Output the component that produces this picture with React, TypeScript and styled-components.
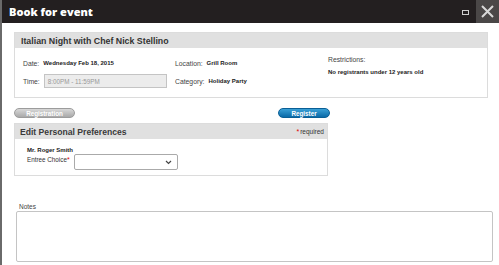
import React from 'react';
import styled, { createGlobalStyle } from 'styled-components';

const GlobalStyle = createGlobalStyle`
  html, body {
    margin: 0;
    padding: 0;
    background: #ffffff;
    font-family: Arial, "Liberation Sans", sans-serif;
    color: #222;
  }
`;

export default function App() {
  return (
    <>
      <GlobalStyle />
      <Dialog>
        <TitleBar>
          <DialogTitle>Book for event</DialogTitle>
          <TitleActions>
            <MinButton>
              <MinBox />
            </MinButton>
            <CloseButton>
              <svg width="13" height="13" viewBox="0 0 13 13">
                <path d="M1 1L12 12M12 1L1 12" stroke="#d8d8d8" strokeWidth="2" />
              </svg>
            </CloseButton>
          </TitleActions>
        </TitleBar>
        <Body>
          <EventCard>
            <CardHeader>
              <EventName>Italian Night with Chef Nick Stellino</EventName>
            </CardHeader>
            <EventGrid>
              <Field>
                <Label>Date:</Label>
                <Value>Wednesday Feb 18, 2015</Value>
              </Field>
              <Field>
                <Label>Location:</Label>
                <Value>Grill Room</Value>
              </Field>
              <RestrictionCell>
                <Label>Restrictions:</Label>
                <Value>No registrants under 12 years old</Value>
              </RestrictionCell>
              <Field>
                <Label>Time:</Label>
                <TimeBox>8:00PM - 11:59PM</TimeBox>
              </Field>
              <Field>
                <Label>Category:</Label>
                <Value>Holiday Party</Value>
              </Field>
            </EventGrid>
          </EventCard>

          <Steps>
            <Pill>Registration</Pill>
            <Pill $active>Register</Pill>
          </Steps>

          <PrefCard>
            <PrefHeader>
              <PrefTitle>Edit Personal Preferences</PrefTitle>
              <Required>
                <Star>*</Star>required
              </Required>
            </PrefHeader>
            <PrefBody>
              <Guest>Mr. Roger Smith</Guest>
              <ChoiceRow>
                <ChoiceLabel>
                  Entree Choice<Star>*</Star>
                </ChoiceLabel>
                <Select>
                  <svg width="7" height="5" viewBox="0 0 7 5">
                    <path d="M1 1L3.5 3.5L6 1" stroke="#444" strokeWidth="1.2" fill="none" />
                  </svg>
                </Select>
              </ChoiceRow>
            </PrefBody>
          </PrefCard>

          <NotesBlock>
            <NotesLabel>Notes</NotesLabel>
            <NotesArea />
          </NotesBlock>
        </Body>
      </Dialog>
    </>
  );
}

const Dialog = styled.div`
  width: 499px;
  height: 265px;
  display: flex;
  flex-direction: column;
  border-left: 2px solid #6a6a6a;
  box-sizing: border-box;
  overflow: hidden;
`;

const TitleBar = styled.header`
  height: 23px;
  background: #231f20;
  display: flex;
  align-items: center;
  justify-content: space-between;
  padding-left: 7px;
  flex-shrink: 0;
`;

const DialogTitle = styled.h1`
  margin: 0;
  color: #ffffff;
  font-family: "Open Sans", "Liberation Sans", sans-serif;
  font-size: 11px;
  font-weight: 800;
`;

const TitleActions = styled.div`
  display: flex;
  height: 100%;
  align-items: stretch;
`;

const MinButton = styled.div`
  width: 22px;
  display: flex;
  align-items: center;
  justify-content: center;
`;

const MinBox = styled.div`
  width: 5px;
  height: 3px;
  border: 1px solid #cfcfcf;
  margin-top: 2px;
`;

const CloseButton = styled.div`
  width: 23px;
  background: #4a4747;
  display: flex;
  align-items: center;
  justify-content: center;
`;

const Body = styled.div`
  flex: 1;
  padding: 9px 4px 0 12px;
  display: flex;
  flex-direction: column;
`;

const EventCard = styled.section`
  width: 474px;
  border: 1px solid #dcdcdc;
  box-sizing: border-box;
  height: 66px;
`;

const CardHeader = styled.div`
  height: 15px;
  background: #e0e0e0;
  display: flex;
  align-items: center;
  padding-left: 6px;
`;

const EventName = styled.h2`
  margin: 0;
  font-size: 8.8px;
  font-weight: 700;
  color: #333;
`;

const EventGrid = styled.div`
  display: grid;
  grid-template-columns: 152px 153px 1fr;
  grid-template-rows: 18px 18px;
  padding: 6px 0 0 8px;
`;

const Field = styled.div`
  display: flex;
  align-items: center;
  gap: 4px;
`;

const RestrictionCell = styled.div`
  grid-row: span 2;
  display: flex;
  flex-direction: column;
  gap: 6px;
  padding-top: 2px;
`;

const Label = styled.span`
  font-size: 6.8px;
  color: #444;
`;

const Value = styled.span`
  font-size: 6px;
  font-weight: 700;
  color: #222;
`;

const TimeBox = styled.div`
  width: 123px;
  height: 14px;
  box-sizing: border-box;
  border: 1px solid #c4c4c4;
  background: #ececec;
  font-size: 6.3px;
  color: #999;
  padding-left: 3px;
  display: flex;
  align-items: center;
`;

const Steps = styled.div`
  display: flex;
  justify-content: space-between;
  width: 316px;
  margin-top: 10px;
`;

const Pill = styled.div<{ $active?: boolean }>`
  height: 8px;
  width: ${(p) => (p.$active ? '50px' : '59px')};
  border-radius: 5px;
  font-size: 6.3px;
  font-weight: 700;
  color: #ffffff;
  display: flex;
  align-items: center;
  justify-content: center;
  background: ${(p) =>
    p.$active
      ? 'linear-gradient(#3aa0d6, #0a6aa8)'
      : 'linear-gradient(#d8d8d8, #a9a9a9)'};
  border: 1px solid ${(p) => (p.$active ? '#0a5f96' : '#9c9c9c')};
`;

const PrefCard = styled.section`
  width: 314px;
  margin-top: 5px;
  border: 1px solid #dcdcdc;
  box-sizing: border-box;
  height: 53px;
`;

const PrefHeader = styled.div`
  height: 15px;
  background: #e0e0e0;
  display: flex;
  align-items: center;
  justify-content: space-between;
  padding: 0 3px 0 5px;
`;

const PrefTitle = styled.h2`
  margin: 0;
  font-size: 8.6px;
  font-weight: 700;
  color: #3a3a3a;
`;

const Required = styled.span`
  font-size: 6.5px;
  color: #333;
`;

const Star = styled.sup`
  color: #e00000;
  font-size: 7px;
  vertical-align: top;
  line-height: 1;
  margin-right: 1px;
`;

const PrefBody = styled.div`
  padding: 8px 0 0 12px;
  display: flex;
  flex-direction: column;
  gap: 1px;
`;

const Guest = styled.div`
  font-size: 6px;
  font-weight: 700;
  color: #222;
`;

const ChoiceRow = styled.div`
  display: flex;
  align-items: flex-start;
  gap: 3px;
`;

const ChoiceLabel = styled.span`
  font-size: 6.3px;
  color: #333;
  padding-top: 2px;
`;

const Select = styled.div`
  width: 104px;
  height: 16px;
  box-sizing: border-box;
  border: 1px solid #aaa;
  border-radius: 2px;
  background: #fff;
  display: flex;
  align-items: center;
  justify-content: flex-end;
  padding-right: 5px;
`;

const NotesBlock = styled.div`
  margin-top: 27px;
  padding-left: 2px;
  display: flex;
  flex-direction: column;
  gap: 1px;
`;

const NotesLabel = styled.span`
  font-size: 6.5px;
  color: #444;
  padding-left: 3px;
`;

const NotesArea = styled.div`
  width: 477px;
  height: 51px;
  box-sizing: border-box;
  border: 1px solid #c4c4c4;
  border-radius: 2px;
`;
